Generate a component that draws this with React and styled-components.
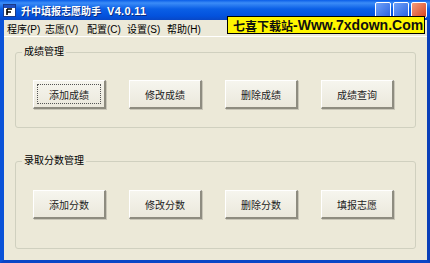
import React from 'react';
import styled, { createGlobalStyle } from 'styled-components';

const GlobalStyle = createGlobalStyle`
  html, body {
    margin: 0;
    padding: 0;
    background: #ece9d8;
  }
  * {
    box-sizing: border-box;
  }
`;

const FONT = `"Liberation Sans", "Noto Sans CJK SC", sans-serif`;

const Window = styled.div`
  position: relative;
  width: 430px;
  height: 263px;
  display: flex;
  flex-direction: column;
  background: #ece9d8;
  font-family: ${FONT};
  font-size: 10px;
  color: #000;
  overflow: hidden;
`;

const TitleBar = styled.div`
  height: 20px;
  display: flex;
  align-items: center;
  padding: 0 3px;
  gap: 5px;
  background: linear-gradient(#0a5ee8 0%, #3b8cf7 15%, #0a5fe6 45%, #0352dd 80%, #0847c6 100%);
`;

const Title = styled.span`
  flex: 1;
  color: #fff;
  font-weight: bold;
  font-size: 10px;
  text-shadow: 1px 1px 0 #0b2d80;
  white-space: nowrap;
`;

const Version = styled.span`
  font-size: 11px;
  margin-left: 6px;
  letter-spacing: 0.3px;
`;

const Controls = styled.div`
  display: flex;
  gap: 2px;
`;

const CtrlBtn = styled.div`
  width: 16px;
  height: 16px;
  border: 1px solid #fff;
  border-radius: 2px;
  background: ${p => (p.close ? 'linear-gradient(135deg, #f29c7e, #d8441f)' : 'linear-gradient(135deg, #6fa2f9, #2a63e0)')};
`;

const Body = styled.div`
  flex: 1;
  display: flex;
  flex-direction: column;
  border-left: 4px solid #0a52d8;
  border-right: 3px solid #0a3fb8;
  border-bottom: 3px solid #0a46c6;
`;

const MenuBar = styled.div`
  height: 17px;
  display: flex;
  align-items: center;
  padding-left: 3px;
  background: #ece9d8;
  border-bottom: 1px solid #fff;
`;

const MenuItem = styled.span`
  width: ${p => p.w}px;
  font-size: 10px;
  white-space: nowrap;
`;

const Client = styled.div`
  flex: 1;
  display: flex;
  flex-direction: column;
  padding: 8px 11px 0 11px;
  gap: 26px;
`;

const Group = styled.fieldset`
  margin: 0;
  padding: 0;
  min-width: 0;
  height: ${p => p.h}px;
  border: 1px solid #d0d0bf;
  border-radius: 3px;
`;

const Legend = styled.legend`
  padding: 0 2px;
  margin-left: 6px;
  font-size: 10px;
  line-height: 14px;
  color: #000;
`;

const ButtonRow = styled.div`
  display: flex;
  gap: 23px;
  padding: ${p => p.top}px 0 0 17px;
`;

const Button = styled.div`
  width: 73px;
  height: 29px;
  display: flex;
  align-items: center;
  justify-content: center;
  background: linear-gradient(#f6f5ee, #ebe8dc);
  border-top: 1px solid #fff;
  border-left: 1px solid #fff;
  border-right: 2px solid #8e8c80;
  border-bottom: 2px solid #8e8c80;
  box-shadow: 1px 1px 0 #c9c6b8;
  font-size: 10px;
  color: #222;
  position: relative;
  ${p => p.focused && `
    &::after {
      content: '';
      position: absolute;
      inset: 3px;
      border: 1px dotted #555;
    }
  `}
`;

const Banner = styled.div`
  position: absolute;
  left: 227px;
  top: 16px;
  width: 198px;
  height: 18px;
  background: #fff600;
  border: 1px solid #000;
  display: flex;
  align-items: center;
  padding-left: 5px;
  font-weight: bold;
  color: #101010;
  white-space: nowrap;
`;

const BannerCn = styled.span`
  font-size: 12px;
`;

const BannerEn = styled.span`
  font-size: 14px;
`;

const AppIcon = () => (
  <svg width="13" height="13" viewBox="0 0 13 13">
    <rect x="0.5" y="0.5" width="12" height="12" fill="#fff" stroke="#1a3a8a" />
    <rect x="1" y="1" width="11" height="3" fill="#2050c0" />
    <path d="M4 5h5M4 5v6M4 8h4" stroke="#000" strokeWidth="1.6" fill="none" />
  </svg>
);

const menus = [
  ['程序(P)', 38],
  ['志愿(V)', 42],
  ['配置(C)', 40],
  ['设置(S)', 40],
  ['帮助(H)', 40],
];
const scoreButtons = ['添加成绩', '修改成绩', '删除成绩', '成绩查询'];
const entryButtons = ['添加分数', '修改分数', '删除分数', '填报志愿'];

const App = () => {
  return (
    <>
      <GlobalStyle />
      <Window>
        <TitleBar>
          <AppIcon />
          <Title>
            升中填报志愿助手<Version>V4.0.11</Version>
          </Title>
          <Controls>
            <CtrlBtn />
            <CtrlBtn />
            <CtrlBtn close />
          </Controls>
        </TitleBar>
        <Body>
          <MenuBar>
            {menus.map(([m, w]) => (
              <MenuItem key={m} w={w}>{m}</MenuItem>
            ))}
          </MenuBar>
          <Client>
            <Group h={83}>
              <Legend>成绩管理</Legend>
              <ButtonRow top={21}>
                {scoreButtons.map((b, i) => (
                  <Button key={b} focused={i === 0}>{b}</Button>
                ))}
              </ButtonRow>
            </Group>
            <Group h={95}>
              <Legend>录取分数管理</Legend>
              <ButtonRow top={22}>
                {entryButtons.map(b => (
                  <Button key={b}>{b}</Button>
                ))}
              </ButtonRow>
            </Group>
          </Client>
        </Body>
        <Banner>
          <BannerCn>七喜下载站</BannerCn>
          <BannerEn>-Www.7xdown.Com</BannerEn>
        </Banner>
      </Window>
    </>
  );
};

export default App;
